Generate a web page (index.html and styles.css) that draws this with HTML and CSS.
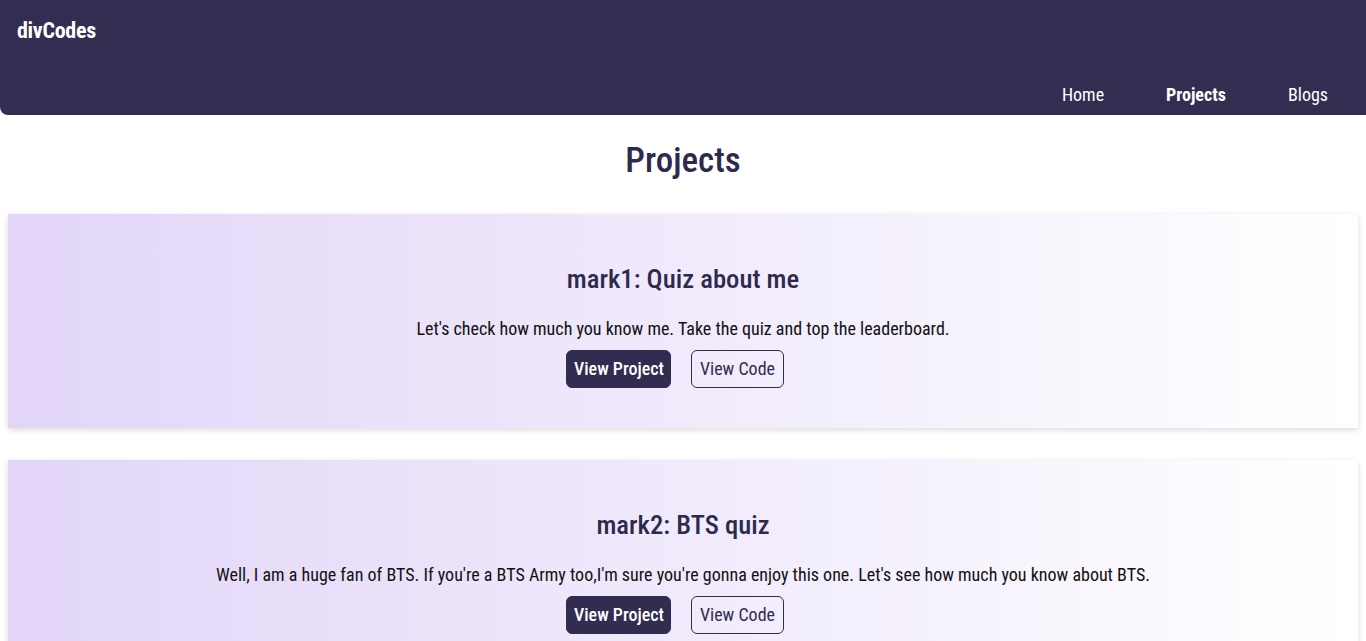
FILE: index.html
```html
<!DOCTYPE html>
<html lang="en">
<head>
<meta charset="utf-8">
<title>divCodes - Projects</title>
<link rel="stylesheet" href="styles.css">
</head>
<body>
<header class="navbar">
  <div class="brand">divCodes</div>
  <nav class="nav-links">
    <a class="nav-link" href="#">Home</a>
    <a class="nav-link active" href="#">Projects</a>
    <a class="nav-link" href="#">Blogs</a>
  </nav>
</header>
<main class="main">
  <h1 class="page-title">Projects</h1>
  <section class="card">
    <h2 class="card-title">mark1: Quiz about me</h2>
    <p class="card-text">Let's check how much you know me. Take the quiz and top the leaderboard.</p>
    <div class="card-actions">
      <a class="btn btn-primary" href="#">View Project</a>
      <a class="btn btn-outline" href="#">View Code</a>
    </div>
  </section>
  <section class="card">
    <h2 class="card-title">mark2: BTS quiz</h2>
    <p class="card-text">Well, I am a huge fan of BTS. If you're a BTS Army too,I'm sure you're gonna enjoy this one. Let's see how much you know about BTS.</p>
    <div class="card-actions">
      <a class="btn btn-primary" href="#">View Project</a>
      <a class="btn btn-outline" href="#">View Code</a>
    </div>
  </section>
</main>
</body>
</html>
```
FILE: styles.css
```css
* { box-sizing: border-box; }
html, body { margin: 0; padding: 0; }
body {
  font-family: "Roboto", "Liberation Sans", sans-serif;
  font-stretch: condensed;
  color: #111;
  background: #fff;
}
.navbar {
  background: #332d52;
  height: 115px;
  border-bottom-left-radius: 8px;
  display: flex;
  flex-direction: column;
  justify-content: space-between;
  padding: 18px 0 10px 17px;
}
.brand {
  color: #fff;
  font-weight: 700;
  font-size: 22px;
  letter-spacing: -0.3px;
}
.nav-links {
  display: flex;
  justify-content: flex-end;
  padding-right: 38px;
}
.nav-link {
  color: #fff;
  text-decoration: none;
  font-size: 18px;
  margin-left: 62px;
}
.nav-link.active { font-weight: 700; }
.main { padding: 0 8px; }
.page-title {
  text-align: center;
  color: #2e2a4e;
  font-size: 35px;
  font-weight: 500;
  margin: 25px 0 33px;
}
.card {
  background: linear-gradient(to right, #e2d5f8, #ffffff);
  box-shadow: 0 2px 6px rgba(0, 0, 0, 0.15);
  text-align: center;
  padding: 49px 20px 40px;
  margin-bottom: 32px;
}
.card-title {
  color: #2e2a4e;
  font-size: 26.7px;
  font-weight: 500;
  margin: 0 0 23px;
}
.card-text {
  font-size: 18px;
  margin: 0 0 11px;
}
.card-actions {
  display: flex;
  justify-content: center;
  gap: 4px;
}
.btn {
  display: inline-block;
  font-size: 18px;
  padding: 7px 7.5px;
  border-radius: 6px;
  text-decoration: none;
  line-height: 22px;
  border: 1px solid #322c50;
  margin-right: 16px;
}
.btn-primary {
  background: #322c50;
  color: #fff;
  font-weight: 500;
  padding: 7px 6.5px;
}
.btn-outline {
  background: transparent;
  color: #322c50;
}
```
